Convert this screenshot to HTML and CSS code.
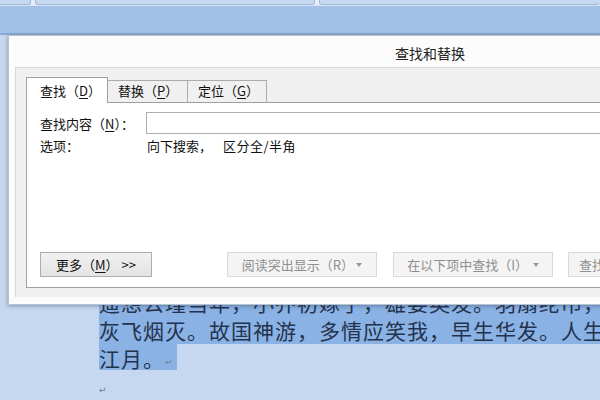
FILE: index.html
```html
<!DOCTYPE html>
<html lang="zh-CN">
<head>
  <meta charset="UTF-8" />
  <meta name="viewport" content="width=device-width, initial-scale=1.0" />
  <title>查找和替换</title>
  <link rel="stylesheet" href="styles.css">
</head>
<body>
  <div class="doc-tabs">
    <div class="doc-tab first"></div>
    <div class="doc-tab mid"></div>
    <div class="doc-tab last"></div>
  </div>
  <div class="ribbon"></div>

  <div class="doc">
    <div class="line sel">遥想公瑾当年，小乔初嫁了，雄姿英发。羽扇纶巾，谈</div>
    <div class="line sel">灰飞烟灭。故国神游，多情应笑我，早生华发。人生</div>
    <div class="line"><span class="sel-part">江月。<span class="mark">↵</span></span></div>
    <div class="line"><span class="mark">↵</span></div>
  </div>

  <div class="dialog">
    <div class="dialog-title">查找和替换</div>
    <div class="client">
      <div class="tabs">
        <div class="tab active">查找（<u>D</u>）</div>
        <div class="tab">替换（<u>P</u>）</div>
        <div class="tab">定位（<u>G</u>）</div>
      </div>
      <div class="page">
        <div class="row">
          <label class="label" for="find">查找内容（<u>N</u>）：</label>
          <input id="find" class="find-input" type="text" />
        </div>
        <div class="row opts">
          <span class="label">选项：</span>
          <span>向下搜索，<span class="opt-b">区分全/半角</span></span>
        </div>
        <div class="buttons">
          <button class="btn more">更多（<u>M</u>）&nbsp;&gt;&gt;</button>
          <button class="btn off w150" disabled>阅读突出显示（R）<span class="caret"></span></button>
          <button class="btn off w160" disabled>在以下项中查找（I）&nbsp;<span class="caret"></span></button>
          <button class="btn off w120" disabled>查找下一处（F）</button>
        </div>
      </div>
    </div>
  </div>
</body>
</html>
```

FILE: styles.css
```css
html, body {
  margin: 0;
  padding: 0;
  width: 600px;
  height: 400px;
  overflow: hidden;
}
body {
  position: relative;
  background: #c5d8f0;
  font-family: "Noto Sans CJK SC", sans-serif;
}

/* window strip at the very top */
.doc-tabs {
  display: flex;
  gap: 4px;
  height: 5px;
  background: #e4edf8;
}
.doc-tab {
  background: #c6d9f0;
  border: 1px solid #9fb7d7;
  border-top: none;
  border-radius: 0 0 3px 3px;
}
.doc-tab.first { width: 30px; border-left: none; border-radius: 0 0 3px 0; }
.doc-tab.mid { width: 278px; }
.doc-tab.last { flex: 1; border-right: none; }

.ribbon {
  height: 27px;
  background: #a3c1e8;
  border-top: 1px solid #d6e4f5;
  border-bottom: 2px solid #8ca9d1;
}

/* document text behind the dialog */
.doc {
  padding: 253px 0 0 99px;
  font-size: 21px;
  letter-spacing: 1px;
  line-height: 28px;
  color: #23334d;
}
.line {
  height: 28px;
  white-space: nowrap;
  overflow: hidden;
}
.sel { background: #8bb2e4; }
.sel-part {
  display: inline-block;
  height: 26px;
  width: 78px;
  background: #8bb2e4;
  vertical-align: top;
}
.mark {
  font-family: "DejaVu Sans", sans-serif;
  font-size: 9px;
  color: #6d7f99;
  letter-spacing: 0;
  vertical-align: top;
  line-height: 36px;
}

/* the dialog window */
.dialog {
  position: absolute;
  left: 8px;
  top: 35px;
  width: 844px;
  height: 270px;
  box-sizing: border-box;
  background: #fcfcfc;
  border: 1px solid #b7c3d3;
  box-shadow: 0 1px 4px rgba(40, 60, 90, 0.45);
}
.dialog-title {
  height: 31px;
  padding-top: 3px;
  box-sizing: border-box;
  display: flex;
  align-items: center;
  justify-content: center;
  font-size: 14px;
  color: #222;
}
.client {
  margin-left: 6px;
  height: 230px;
  box-sizing: border-box;
  background: #f0f0f0;
  border-top: 1px solid #d9d9d9;
  border-left: 1px solid #d9d9d9;
  padding: 9px 0 9px 10px;
  font-size: 13px;
  color: #111;
}
.tabs {
  display: flex;
  align-items: flex-end;
  height: 25px;
}
.tab {
  position: relative;
  box-sizing: border-box;
  height: 22px;
  width: 80px;
  padding-left: 10px;
  line-height: 20px;
  border: 1px solid #acacac;
  border-bottom: none;
  border-left: none;
  background: #f0f0f0;
}
.tab.active {
  z-index: 1;
  height: 26px;
  width: 82px;
  margin-bottom: -1px;
  padding-left: 13px;
  line-height: 25px;
  border-left: 1px solid #a0a0a0;
  border-color: #a0a0a0;
  background: #fff;
}
.tab:last-child { width: 79px; }
.tab u, .label u, .btn u { text-decoration-thickness: 1px; text-underline-offset: 2px; }

.page {
  height: 186px;
  box-sizing: border-box;
  border: 1px solid #a0a0a0;
  background: #fff;
  padding: 9px 0 10px 13px;
  display: flex;
  flex-direction: column;
}
.row {
  display: flex;
  align-items: center;
}
.label {
  width: 106px;
  flex: none;
}
.find-input {
  flex: 1;
  height: 22px;
  box-sizing: border-box;
  margin: 0;
  border: 1px solid #abadb3;
  background: #fff;
  font: inherit;
}
.opts {
  margin-top: 4px;
  line-height: 16px;
}
.opts .label { width: 107px; }
.opt-b { margin-left: 11px; letter-spacing: 0.5px; }

.buttons {
  margin-top: auto;
  display: flex;
  gap: 16px;
}
.btn {
  height: 25px;
  margin: 0;
  padding: 0;
  font: inherit;
  font-size: 13px;
  color: #111;
  border: 1px solid #adadad;
  background: linear-gradient(#f0f0f0, #e4e4e4);
  display: flex;
  align-items: center;
  justify-content: center;
}
.btn.more { width: 112px; margin-right: 59px; }
.btn.off {
  color: #8f8f8f;
  border-color: #d9d9d9;
  background: #f4f4f4;
}
.w150 { width: 150px; }
.w160 { width: 160px; }
.w120 { width: 120px; margin-left: -1px; }
.caret {
  display: inline-block;
  width: 0;
  height: 0;
  margin-left: 2px;
  border-left: 3.5px solid transparent;
  border-right: 3.5px solid transparent;
  border-top: 4px solid #9a9a9a;
}
```
